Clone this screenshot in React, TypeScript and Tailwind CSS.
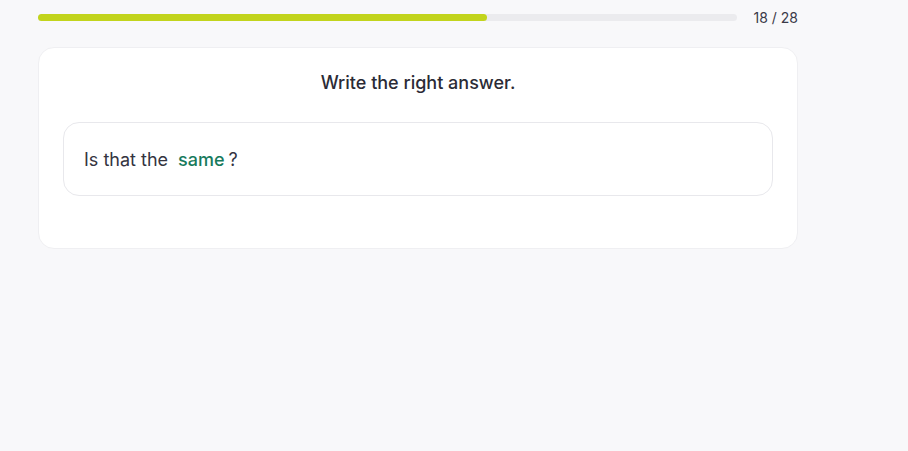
export default function App() {
  const current = 18;
  const total = 28;
  return (
    <div
      className="min-h-[451px] bg-[#f8f8fa] pl-[38px] pt-[8px]"
      style={{ fontFamily: 'Inter, "Noto Sans", sans-serif' }}
    >
      <div className="w-[760px]">
        <div className="flex h-[18px] items-center gap-[17px]">
          <div className="h-[7px] flex-1 rounded-full bg-[#ebebee]">
            <div
              className="h-full rounded-full bg-[#c2d41c]"
              style={{ width: `${(current / total) * 100}%` }}
            />
          </div>
          <span className="text-[14px] text-[#3a3a48]">
            {current} / {total}
          </span>
        </div>

        <div className="mt-[21px] rounded-[16px] border border-[#efeff2] bg-white px-[24px] pt-[22px] pb-[52px]">
          <p className="text-center text-[18px] font-medium leading-[26px] text-[#2b2b36]">
            Write the right answer.
          </p>
          <div className="mt-[26px] flex h-[74px] items-center rounded-[16px] border border-[#e8e8ec] px-[20px] text-[18px] text-[#34343f]">
            <span>Is that the</span>
            <span className="ml-[10px] font-medium text-[#177a5c]">same</span>
            <span className="ml-[4px]">?</span>
          </div>
        </div>
      </div>
    </div>
  );
}
